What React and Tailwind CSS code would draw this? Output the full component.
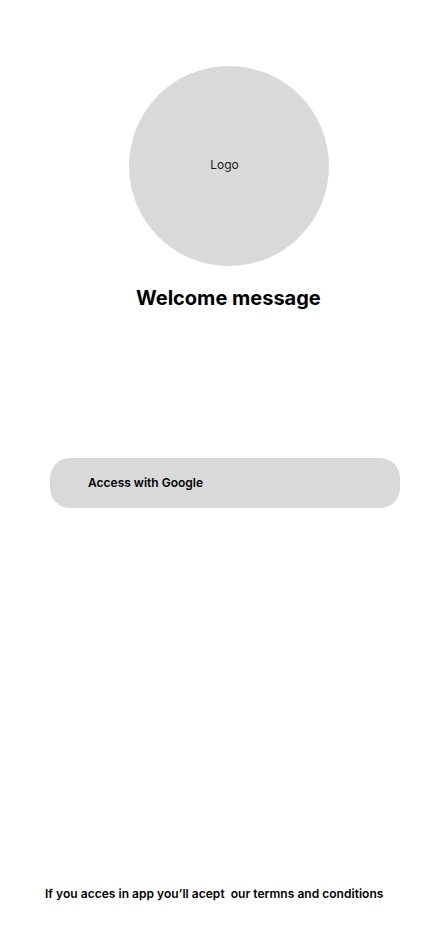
export default function App() {
  return (
    <div className="min-h-[932px] w-[430px] bg-white flex flex-col font-['Inter',sans-serif] text-black">
      {/* Logo */}
      <div className="pt-[66px] pl-[129px]">
        <div className="w-[200px] h-[200px] rounded-full bg-[#d9d9d9] flex items-center justify-center">
          <span className="text-[12px] text-[#1a1a1a] -ml-[9px] -mt-[3px]">Logo</span>
        </div>
      </div>

      {/* Welcome */}
      <h1 className="mt-[20px] pl-[136px] text-[20px] leading-[24px] font-bold">Welcome message</h1>

      {/* Google button */}
      <div className="mt-[148px] px-[50px]">
        <button className="w-[350px] h-[50px] rounded-[20px] bg-[#d9d9d9] flex items-center pl-[38px] text-[12px] font-semibold">
          Access with Google
        </button>
      </div>

      <div className="flex-1" />

      {/* Terms */}
      <p className="pl-[45px] pb-[30px] text-[12px] leading-[16px] font-semibold tracking-[0.03px] whitespace-pre">
        If you acces in app you’ll acept  our termns and conditions
      </p>
    </div>
  );
}
